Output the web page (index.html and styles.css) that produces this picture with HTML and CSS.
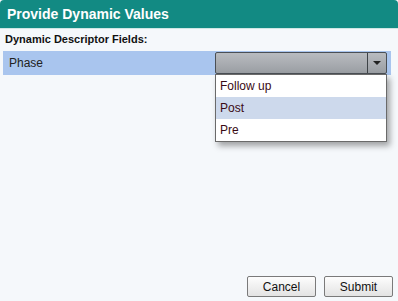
FILE: index.html
```html
<!DOCTYPE html>
<html>
<head>
    <title>Provide Dynamic Values</title>
    <link rel="stylesheet" href="styles.css">
</head>
<body>
    <div class="dialog">
        <div class="dialog-header">Provide Dynamic Values</div>
        <div class="dialog-body">
            <div class="section-label">Dynamic Descriptor Fields:</div>
            <div class="field-row">
                <span class="field-name">Phase</span>
                <div class="combo">
                    <div class="combo-box">
                        <div class="combo-value"></div>
                        <div class="combo-arrow"><span class="arrow"></span></div>
                    </div>
                    <ul class="combo-list">
                        <li>Follow up</li>
                        <li class="hover">Post</li>
                        <li>Pre</li>
                    </ul>
                </div>
            </div>
        </div>
        <div class="dialog-footer">
            <button type="button" class="button">Cancel</button>
            <button type="button" class="button">Submit</button>
        </div>
    </div>
</body>
</html>
```

FILE: styles.css
```css
body {
    margin: 0;
    padding: 0;
    font-family: "Liberation Sans", Arial, sans-serif;
    background-color: #f5f8fb;
}
.dialog {
    width: 398px;
    height: 301px;
    display: flex;
    flex-direction: column;
    background-color: #f5f8fb;
}
.dialog-header {
    height: 28px;
    line-height: 28px;
    padding-left: 7px;
    color: #fff;
    font-size: 14px;
    font-weight: bold;
    background-color: #128a83;
    border-radius: 4px 4px 0 0;
    border-bottom: 1px solid #cfe6e4;
}
.dialog-body {
    flex: 1;
    padding: 0 7px 0 3px;
}
.section-label {
    padding: 4px 0 0 2px;
    height: 18px;
    font-size: 11px;
    font-weight: bold;
    color: #111;
}
.field-row {
    display: flex;
    justify-content: space-between;
    align-items: center;
    height: 24px;
    background-color: #a9c5ee;
}
.field-name {
    padding-left: 6px;
    font-size: 12px;
    color: #222;
}
.combo {
    position: relative;
    width: 172px;
    margin-right: 4px;
}
.combo-box {
    display: flex;
    height: 20px;
    border: 1px solid #4a4f55;
    border-radius: 2px;
    background: linear-gradient(#b9bcc0, #9a9ea3);
}
.combo-value {
    flex: 1;
}
.combo-arrow {
    width: 18px;
    border-left: 1px solid #3e4347;
    display: flex;
    align-items: center;
    justify-content: center;
}
.arrow {
    width: 0;
    height: 0;
    border-left: 4px solid transparent;
    border-right: 4px solid transparent;
    border-top: 4px solid #222;
}
.combo-list {
    position: absolute;
    top: 22px;
    left: 0;
    right: 0;
    margin: 0;
    padding: 0;
    list-style: none;
    background-color: #fff;
    border: 1px solid #6a6a6a;
    box-shadow: 3px 4px 6px rgba(0, 0, 0, 0.35);
}
.combo-list li {
    height: 22px;
    line-height: 22px;
    padding-left: 4px;
    font-size: 12px;
    color: #3a0a14;
}
.combo-list li.hover {
    background-color: #cdd9ec;
}
.dialog-footer {
    display: flex;
    justify-content: flex-end;
    gap: 8px;
    padding: 0 5px 4px 0;
}
.button {
    width: 69px;
    height: 21px;
    padding: 0;
    font-family: "Liberation Sans", Arial, sans-serif;
    font-size: 12px;
    color: #111;
    background: linear-gradient(#fdfdfd, #e3e3e3);
    border: 1px solid #7a7a7a;
    border-radius: 2px;
}
```
